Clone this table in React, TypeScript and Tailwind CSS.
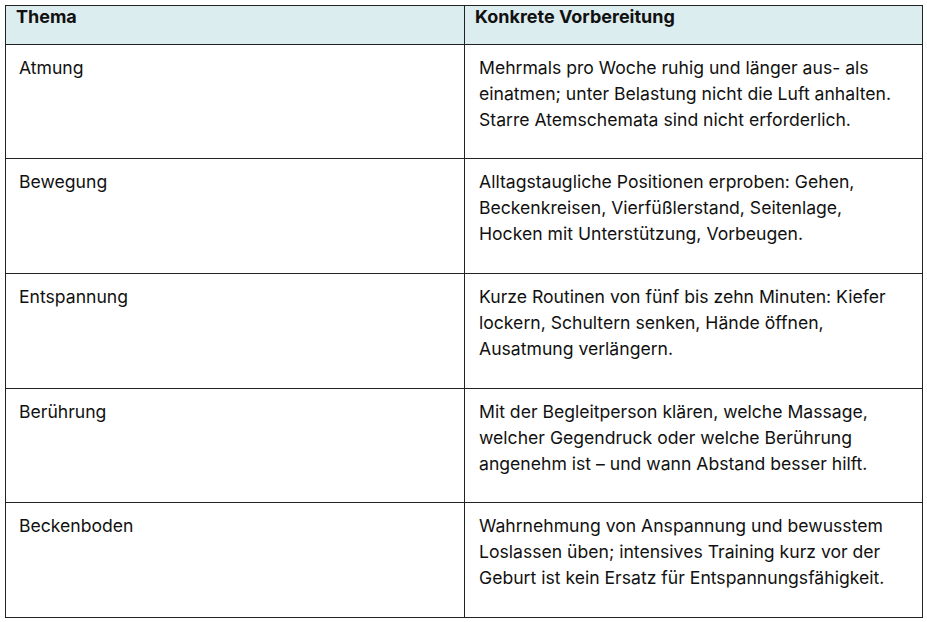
const rows: { topic: string; lines: string[]; h: string }[] = [
  {
    topic: "Atmung",
    lines: [
      "Mehrmals pro Woche ruhig und länger aus- als",
      "einatmen; unter Belastung nicht die Luft anhalten.",
      "Starre Atemschemata sind nicht erforderlich.",
    ],
    h: "h-[114px]",
  },
  {
    topic: "Bewegung",
    lines: [
      "Alltagstaugliche Positionen erproben: Gehen,",
      "Beckenkreisen, Vierfüßlerstand, Seitenlage,",
      "Hocken mit Unterstützung, Vorbeugen.",
    ],
    h: "h-[115px]",
  },
  {
    topic: "Entspannung",
    lines: [
      "Kurze Routinen von fünf bis zehn Minuten: Kiefer",
      "lockern, Schultern senken, Hände öffnen,",
      "Ausatmung verlängern.",
    ],
    h: "h-[115px]",
  },
  {
    topic: "Berührung",
    lines: [
      "Mit der Begleitperson klären, welche Massage,",
      "welcher Gegendruck oder welche Berührung",
      "angenehm ist – und wann Abstand besser hilft.",
    ],
    h: "h-[114px]",
  },
  {
    topic: "Beckenboden",
    lines: [
      "Wahrnehmung von Anspannung und bewusstem",
      "Loslassen üben; intensives Training kurz vor der",
      "Geburt ist kein Ersatz für Entspannungsfähigkeit.",
    ],
    h: "h-[115px]",
  },
];

export default function App() {
  return (
    <div
      className="min-h-[622px] bg-white pl-[5px] pt-[5px] text-[#111]"
      style={{ fontFamily: "Inter, 'Noto Sans', sans-serif" }}
    >
      <table className="w-[918px] table-fixed border-collapse border border-[#222]">
        <colgroup>
          <col className="w-[459px]" />
          <col />
        </colgroup>
        <thead>
          <tr className="h-[39px] bg-[#dcedef]">
            <th className="border border-[#222] pl-[10px] pt-0 text-left align-top text-[18px] leading-[22px] font-bold">
              Thema
            </th>
            <th className="border border-[#222] pl-[10px] pt-0 text-left align-top text-[18px] leading-[22px] font-bold">
              Konkrete Vorbereitung
            </th>
          </tr>
        </thead>
        <tbody>
          {rows.map((r) => (
            <tr key={r.topic} className={r.h}>
              <td className="border border-[#222] pl-[13px] pt-[10px] align-top text-[17.6px] leading-[26px]">
                {r.topic}
              </td>
              <td className="border border-[#222] pl-[14px] pt-[10px] align-top text-[17.6px] leading-[26px]">
                {r.lines.map((l) => (
                  <div key={l}>{l}</div>
                ))}
              </td>
            </tr>
          ))}
        </tbody>
      </table>
    </div>
  );
}
